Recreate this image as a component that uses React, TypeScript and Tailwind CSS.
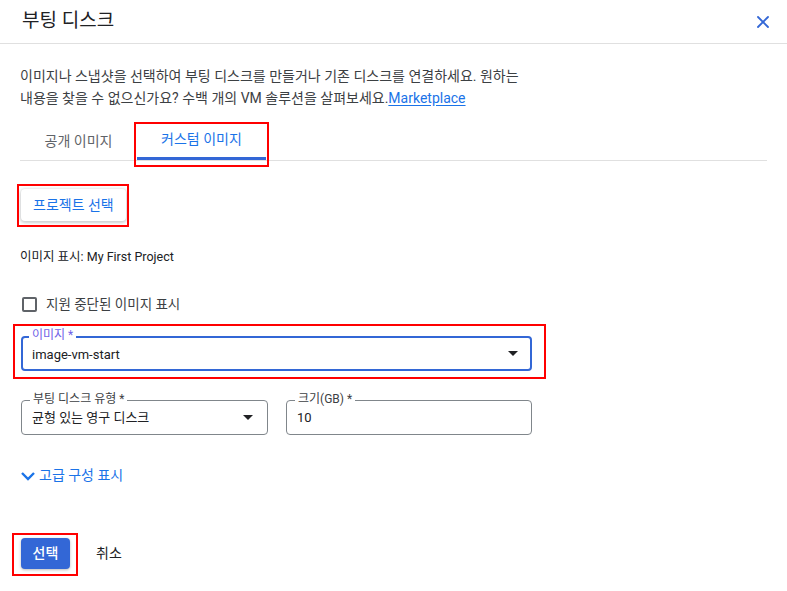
import React from "react";
import { X } from "lucide-react";

const font = { fontFamily: 'Roboto, "Noto Sans CJK KR", sans-serif' };

function RedMark({ className }: { className: string }) {
  return <div className={`pointer-events-none absolute border-2 border-[#ff0000] ${className}`} />;
}

function Caret() {
  return (
    <svg width="10" height="5" viewBox="0 0 10 5" className="shrink-0">
      <path d="M0 0 L10 0 L5 5 Z" fill="#202124" />
    </svg>
  );
}

function OutlinedField({
  label,
  value,
  select,
  className,
}: {
  label: string;
  value: string;
  select?: boolean;
  className: string;
}) {
  return (
    <div className={`relative flex h-[35px] items-center rounded-[4px] border border-[#80868b] pl-[10px] pr-[14px] ${className}`}>
      <span className="absolute left-[8px] top-[-9px] bg-white px-[3px] text-[12px] leading-[14px] text-[#3c4043]">
        {label}
      </span>
      <span className="flex-1 text-[13px] text-[#202124]">{value}</span>
      {select && <Caret />}
    </div>
  );
}

export default function App() {
  return (
    <div className="relative h-[591px] w-[787px] overflow-hidden bg-white" style={font}>
      {/* Header */}
      <div className="flex h-[44px] items-center justify-between border-b border-[#e0e0e0] pl-[22px] pr-[14px]">
        <h2 className="text-[19px] font-normal text-[#202124]">부팅 디스크</h2>
        <X className="h-[20px] w-[20px] text-[#3367d6]" strokeWidth={2.2} />
      </div>

      <div className="pl-[20px] pr-[20px]">
        {/* Description */}
        <p className="pt-[21px] text-[14px] leading-[22px] text-[#3c4043]">
          이미지나 스냅샷을 선택하여 부팅 디스크를 만들거나 기존 디스크를 연결하세요. 원하는
          <br />
          내용을 찾을 수 없으신가요? 수백 개의 VM 솔루션을 살펴보세요.
          <span className="text-[#1a73e8] underline underline-offset-2">Marketplace</span>
        </p>

        {/* Tabs */}
        <div className="mt-[13px] flex border-b border-[#e0e0e0]">
          <div className="flex h-[38px] w-[117px] items-center justify-center text-[14px] text-[#5f6368]">
            공개 이미지
          </div>
          <div className="relative flex h-[38px] w-[129px] items-center justify-center border-b-[3px] border-[#3367d6] text-[14px] text-[#1a73e8]">
            커스텀 이미지
            <RedMark className="left-[-3px] right-[-3px] top-[0px] bottom-[-10px]" />
          </div>
        </div>

        {/* Project button */}
        <div className="mt-[28px] flex">
          <button className="relative ml-[1px] flex h-[32px] items-center rounded-[4px] bg-white px-[12px] text-[14px] font-normal text-[#1a73e8] shadow-[0_1px_3px_1px_rgba(60,64,67,0.25)]">
            프로젝트 선택
            <RedMark className="left-[-4px] right-[-3px] top-[-5px] bottom-[-6px]" />
          </button>
        </div>

        <div className="mt-[28px] text-[12.5px] leading-[16px] text-[#202124]">
          이미지 표시: My First Project
        </div>

        {/* Checkbox */}
        <label className="mt-[29px] flex items-center gap-[9px] pl-[2px]">
          <span className="h-[15px] w-[15px] rounded-[2px] border-2 border-[#5f6368]" />
          <span className="text-[13.5px] text-[#3c4043]">지원 중단된 이미지 표시</span>
        </label>

        {/* Image select */}
        <div className="relative mt-[22px] ml-[1px] w-[511px]">
          <div className="relative flex h-[35px] items-center rounded-[4px] border-2 border-[#3367d6] pl-[9px] pr-[12px]">
            <span className="absolute left-[6px] top-[-10px] bg-white px-[3px] text-[12px] leading-[14px] text-[#6f63e8]">
              이미지 *
            </span>
            <span className="flex-1 pt-[2px] text-[13px] text-[#202124]">image-vm-start</span>
            <Caret />
          </div>
          <RedMark className="left-[-8px] right-[-14px] top-[-12px] bottom-[-8px]" />
        </div>

        {/* Disk type + size */}
        <div className="mt-[29px] ml-[1px] flex gap-[18px]">
          <OutlinedField label="부팅 디스크 유형 *" value="균형 있는 영구 디스크" select className="w-[247px]" />
          <OutlinedField label="크기(GB) *" value="10" className="w-[246px]" />
        </div>

        {/* Advanced */}
        <div className="mt-[30px] flex items-center gap-[3px] text-[14px] text-[#1a73e8]">
          <svg width="16" height="10" viewBox="0 0 16 10" className="shrink-0">
            <path d="M2 2 L8 8 L14 2" fill="none" stroke="#1a73e8" strokeWidth="2.4" />
          </svg>
          <span>고급 구성 표시</span>
        </div>

        {/* Footer buttons */}
        <div className="mt-[52px] flex items-center gap-[26px]">
          <button className="relative ml-[1px] flex h-[31px] w-[49px] items-center justify-center rounded-[4px] bg-[#3367d6] text-[14px] font-medium text-white shadow-[0_1px_3px_rgba(60,64,67,0.35)]">
            선택
            <RedMark className="left-[-9px] right-[-8px] top-[-5px] bottom-[-7px]" />
          </button>
          <span className="text-[14px] text-[#202124]">취소</span>
        </div>
      </div>
    </div>
  );
}
